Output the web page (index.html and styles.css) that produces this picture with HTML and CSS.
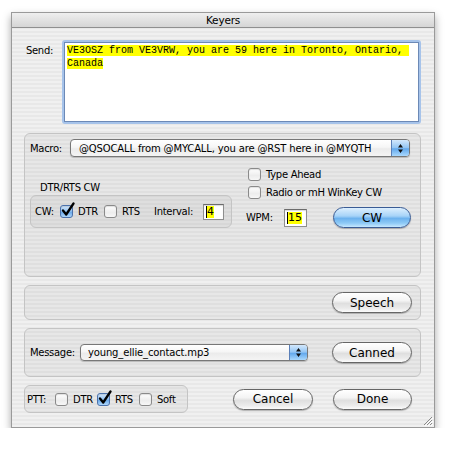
FILE: index.html
```html
<!DOCTYPE html>
<html>
<head>
<meta charset="utf-8">
<title>Keyers</title>
<link rel="stylesheet" href="styles.css">
</head>
<body>
<div class="window">
  <div class="titlebar">Keyers</div>
  <div class="content">
    <div class="send-row">
      <div class="send-label">Send:</div>
      <div class="send-ring">
        <div class="send-box"><span class="hl">VE3OSZ from VE3VRW, you are 59 here in Toronto, Ontario, </span><br><span class="hl">Canada</span></div>
      </div>
    </div>

    <div class="group macro-group">
      <div class="macro-row">
        <span class="macro-label">Macro:</span>
        <div class="popup macro-popup">
          <span class="popup-text">@QSOCALL from @MYCALL, you are @RST here in @MYQTH</span>
          <span class="popup-arrows"><svg width="7" height="11" viewBox="0 0 7 11"><path d="M3.5 1 L6 4.5 H1 Z M3.5 10 L6 6.5 H1 Z" fill="#111"/></svg></span>
        </div>
      </div>
      <div class="cw-area">
        <div class="cw-left">
          <div class="sub-title">DTR/RTS CW</div>
          <div class="group inner-group">
            <span class="lbl-cw">CW:</span>
            <span class="cb checked"><svg class="tick" width="15" height="16" viewBox="0 0 15 16"><path d="M3 8.5 L6.2 12.5 L13.5 1.5" fill="none" stroke="#000" stroke-width="2.3" stroke-linecap="round" stroke-linejoin="round"/></svg></span>
            <span class="lbl-dtr">DTR</span>
            <span class="cb"></span>
            <span class="lbl-rts">RTS</span>
            <span class="lbl-interval">Interval:</span>
            <span class="field interval-field"><span class="hl cursor">4</span></span>
          </div>
        </div>
        <div class="cw-right">
          <div class="check-row"><span class="cb"></span><span class="check-text">Type Ahead</span></div>
          <div class="check-row second"><span class="cb"></span><span class="check-text">Radio or mH WinKey CW</span></div>
          <div class="wpm-row">
            <span class="wpm-label">WPM:</span>
            <span class="field wpm-field"><span class="hl cursor">15</span></span>
            <div class="btn btn-blue cw-btn">CW</div>
          </div>
        </div>
      </div>
    </div>

    <div class="group speech-group">
      <div class="btn speech-btn">Speech</div>
    </div>

    <div class="group message-group">
      <span class="message-label">Message:</span>
      <div class="popup message-popup">
        <span class="popup-text">young_ellie_contact.mp3</span>
        <span class="popup-arrows"><svg width="7" height="11" viewBox="0 0 7 11"><path d="M3.5 1 L6 4.5 H1 Z M3.5 10 L6 6.5 H1 Z" fill="#111"/></svg></span>
      </div>
      <div class="btn canned-btn">Canned</div>
    </div>

    <div class="bottom-row">
      <div class="group ptt-group">
        <span class="lbl-ptt">PTT:</span>
        <span class="cb"></span>
        <span class="lbl-pdtr">DTR</span>
        <span class="cb checked"><svg class="tick" width="15" height="16" viewBox="0 0 15 16"><path d="M3 8.5 L6.2 12.5 L13.5 1.5" fill="none" stroke="#000" stroke-width="2.3" stroke-linecap="round" stroke-linejoin="round"/></svg></span>
        <span class="lbl-prts">RTS</span>
        <span class="cb"></span>
        <span class="lbl-soft">Soft</span>
      </div>
      <div class="btn cancel-btn">Cancel</div>
      <div class="btn done-btn">Done</div>
    </div>
  </div>
  <svg class="grip" width="10" height="10" viewBox="0 0 10 10">
    <path d="M9 1 L1 9 M9 4 L4 9 M9 7 L7 9" stroke="#8a8a8a" stroke-width="1"/>
    <path d="M10 2 L2 10 M10 5 L5 10 M10 8 L8 10" stroke="#ffffff" stroke-width="1"/>
  </svg>
</div>
</body>
</html>
```
FILE: styles.css
```css
body {
  margin: 0;
  background: #ffffff;
  font-family: "DejaVu Sans", sans-serif;
  font-size: 10px;
  letter-spacing: -0.3px;
  color: #000;
}

.window {
  position: relative;
  box-sizing: border-box;
  width: 424px;
  height: 416px;
  margin: 12px 0 0 11px;
  border: 1px solid #9a9a9a;
  background: repeating-linear-gradient(to bottom, #f0f0f0 0, #f0f0f0 2px, #e8e8e8 2px, #e8e8e8 4px);
  box-shadow: 0 4px 8px rgba(0, 0, 0, 0.35);
}

.titlebar {
  height: 14px;
  line-height: 14px;
  text-align: center;
  font-size: 10.5px;
  letter-spacing: -0.2px;
  background: linear-gradient(to bottom, #efefef, #d5d5d5);
  border-bottom: 1px solid #8f8f8f;
}

.content {
  padding: 12px 13px 0 12px;
}

/* Send */
.send-row {
  display: flex;
}
.send-label {
  width: 29px;
  margin-right: 9px;
  text-align: right;
  padding-top: 4px;
  line-height: 13px;
}
.send-ring {
  box-sizing: border-box;
  width: 359px;
  height: 84px;
  padding: 2px;
  border-radius: 3px;
  background: #a6c3ea;
}
.send-box {
  box-sizing: border-box;
  height: 100%;
  border: 1px solid #6c89b6;
  background: #fff;
  padding: 1px 0 0 2px;
  font-family: "Liberation Mono", monospace;
  font-size: 10px;
  line-height: 13px;
  letter-spacing: 0;
  white-space: pre;
}
.hl {
  background: #ffff00;
}

/* groups */
.group {
  box-sizing: border-box;
  border: 1px solid #c4c4c4;
  border-radius: 6px;
  background: rgba(0, 0, 0, 0.035);
}

.macro-group {
  margin-top: 9px;
  height: 144px;
  padding: 5px;
}
.macro-row {
  display: flex;
  align-items: center;
  height: 18px;
}
.macro-label {
  width: 40px;
}

.popup {
  box-sizing: border-box;
  display: flex;
  align-items: stretch;
  border: 1px solid #777;
  border-radius: 4px;
  overflow: hidden;
  background: linear-gradient(to bottom, #ffffff 0%, #f6f6f6 45%, #ebebeb 55%, #f4f4f4 100%);
  box-shadow: 0 1px 1px rgba(0, 0, 0, 0.2);
}
.popup-text {
  flex: 1;
  display: flex;
  align-items: center;
  white-space: nowrap;
  letter-spacing: -0.15px;
}
.popup-arrows {
  width: 17px;
  flex: none;
  display: flex;
  align-items: center;
  justify-content: center;
  border-left: 1px solid #5a7fb8;
  background: linear-gradient(to bottom, #d3e8fc 0%, #93c5f4 48%, #62a8ec 55%, #a9d8fd 100%);
}
.macro-popup {
  width: 340px;
  height: 18px;
}
.macro-popup .popup-text {
  padding-left: 8px;
}

.cw-area {
  display: flex;
}
.cw-left {
  margin-top: 24px;
}
.sub-title {
  padding-left: 10px;
  height: 13px;
  line-height: 13px;
}
.inner-group {
  margin-top: 1px;
  width: 202px;
  height: 33px;
  display: flex;
  align-items: center;
  padding-left: 4px;
}
.lbl-cw { width: 25px; }
.lbl-dtr { width: 26px; margin-left: 5px; }
.lbl-rts { width: 32px; margin-left: 5px; }
.lbl-interval { width: 49px; }

.cb {
  position: relative;
  flex: none;
  box-sizing: border-box;
  width: 13px;
  height: 13px;
  border: 1px solid #8a8a8a;
  border-radius: 3px;
  background: linear-gradient(to bottom, #ffffff 0%, #ededed 60%, #f7f7f7 100%);
  box-shadow: inset 0 1px 1px rgba(0, 0, 0, 0.12);
}
.cb.checked {
  border-color: #4b71ab;
  background: linear-gradient(to bottom, #d6e9fc 0%, #93c2f1 48%, #6aa9ea 55%, #aed7fb 100%);
}
.tick {
  position: absolute;
  left: -1px;
  top: -4px;
}

.field {
  box-sizing: border-box;
  display: flex;
  align-items: center;
  border: 1px solid #8e8e8e;
  border-top-color: #6c6c6c;
  background: #fff;
  box-shadow: inset 0 1px 1px rgba(0, 0, 0, 0.15);
  padding-left: 2px;
  font-size: 11px;
  letter-spacing: 0;
}
.cursor {
  border-left: 1px solid #000;
  line-height: 12px;
}
.interval-field {
  width: 21px;
  height: 16px;
}

.cw-right {
  margin-left: 14px;
  margin-top: 11px;
}
.check-row {
  display: flex;
  align-items: center;
  height: 13px;
  padding-left: 2px;
}
.check-row.second {
  margin-top: 5px;
}
.check-text {
  margin-left: 5px;
}
.wpm-row {
  display: flex;
  align-items: center;
  height: 21px;
  margin-top: 8px;
}
.wpm-label {
  width: 38px;
}
.wpm-field {
  width: 23px;
  height: 18px;
}

.btn {
  box-sizing: border-box;
  display: flex;
  align-items: center;
  justify-content: center;
  height: 21px;
  border: 1px solid #666;
  border-radius: 11px;
  background: linear-gradient(to bottom, #ffffff 0%, #f4f4f4 40%, #dfdfdf 55%, #eaeaea 80%, #fbfbfb 100%);
  box-shadow: 0 1px 1px rgba(0, 0, 0, 0.25);
  font-size: 12px;
  letter-spacing: 0;
}
.btn-blue {
  border-color: #3a5c95;
  background: linear-gradient(to bottom, #ddeffe 0%, #a7d3f8 42%, #6db2ee 55%, #8ecaf6 80%, #c6e8ff 100%);
}
.cw-btn {
  width: 78px;
  margin-left: 26px;
}

.speech-group {
  margin-top: 8px;
  height: 35px;
  display: flex;
  align-items: center;
  justify-content: flex-end;
  padding-right: 8px;
}
.speech-btn {
  width: 80px;
}

.message-group {
  margin-top: 8px;
  height: 49px;
  display: flex;
  align-items: center;
  padding-left: 5px;
}
.message-label {
  width: 50px;
}
.message-popup {
  width: 228px;
  height: 17px;
}
.message-popup .popup-text {
  padding-left: 7px;
}
.canned-btn {
  width: 80px;
  margin-left: 24px;
}

.bottom-row {
  margin-top: 8px;
  display: flex;
  align-items: center;
}
.ptt-group {
  width: 164px;
  height: 28px;
  display: flex;
  align-items: center;
  padding-left: 2px;
}
.lbl-ptt { width: 28px; }
.lbl-pdtr { width: 24px; margin-left: 5px; }
.lbl-prts { width: 24px; margin-left: 5px; }
.lbl-soft { margin-left: 5px; }

.cancel-btn {
  width: 80px;
  margin-left: 45px;
}
.done-btn {
  width: 79px;
  margin-left: 20px;
}

.grip {
  position: absolute;
  right: 1px;
  bottom: 1px;
}
```
